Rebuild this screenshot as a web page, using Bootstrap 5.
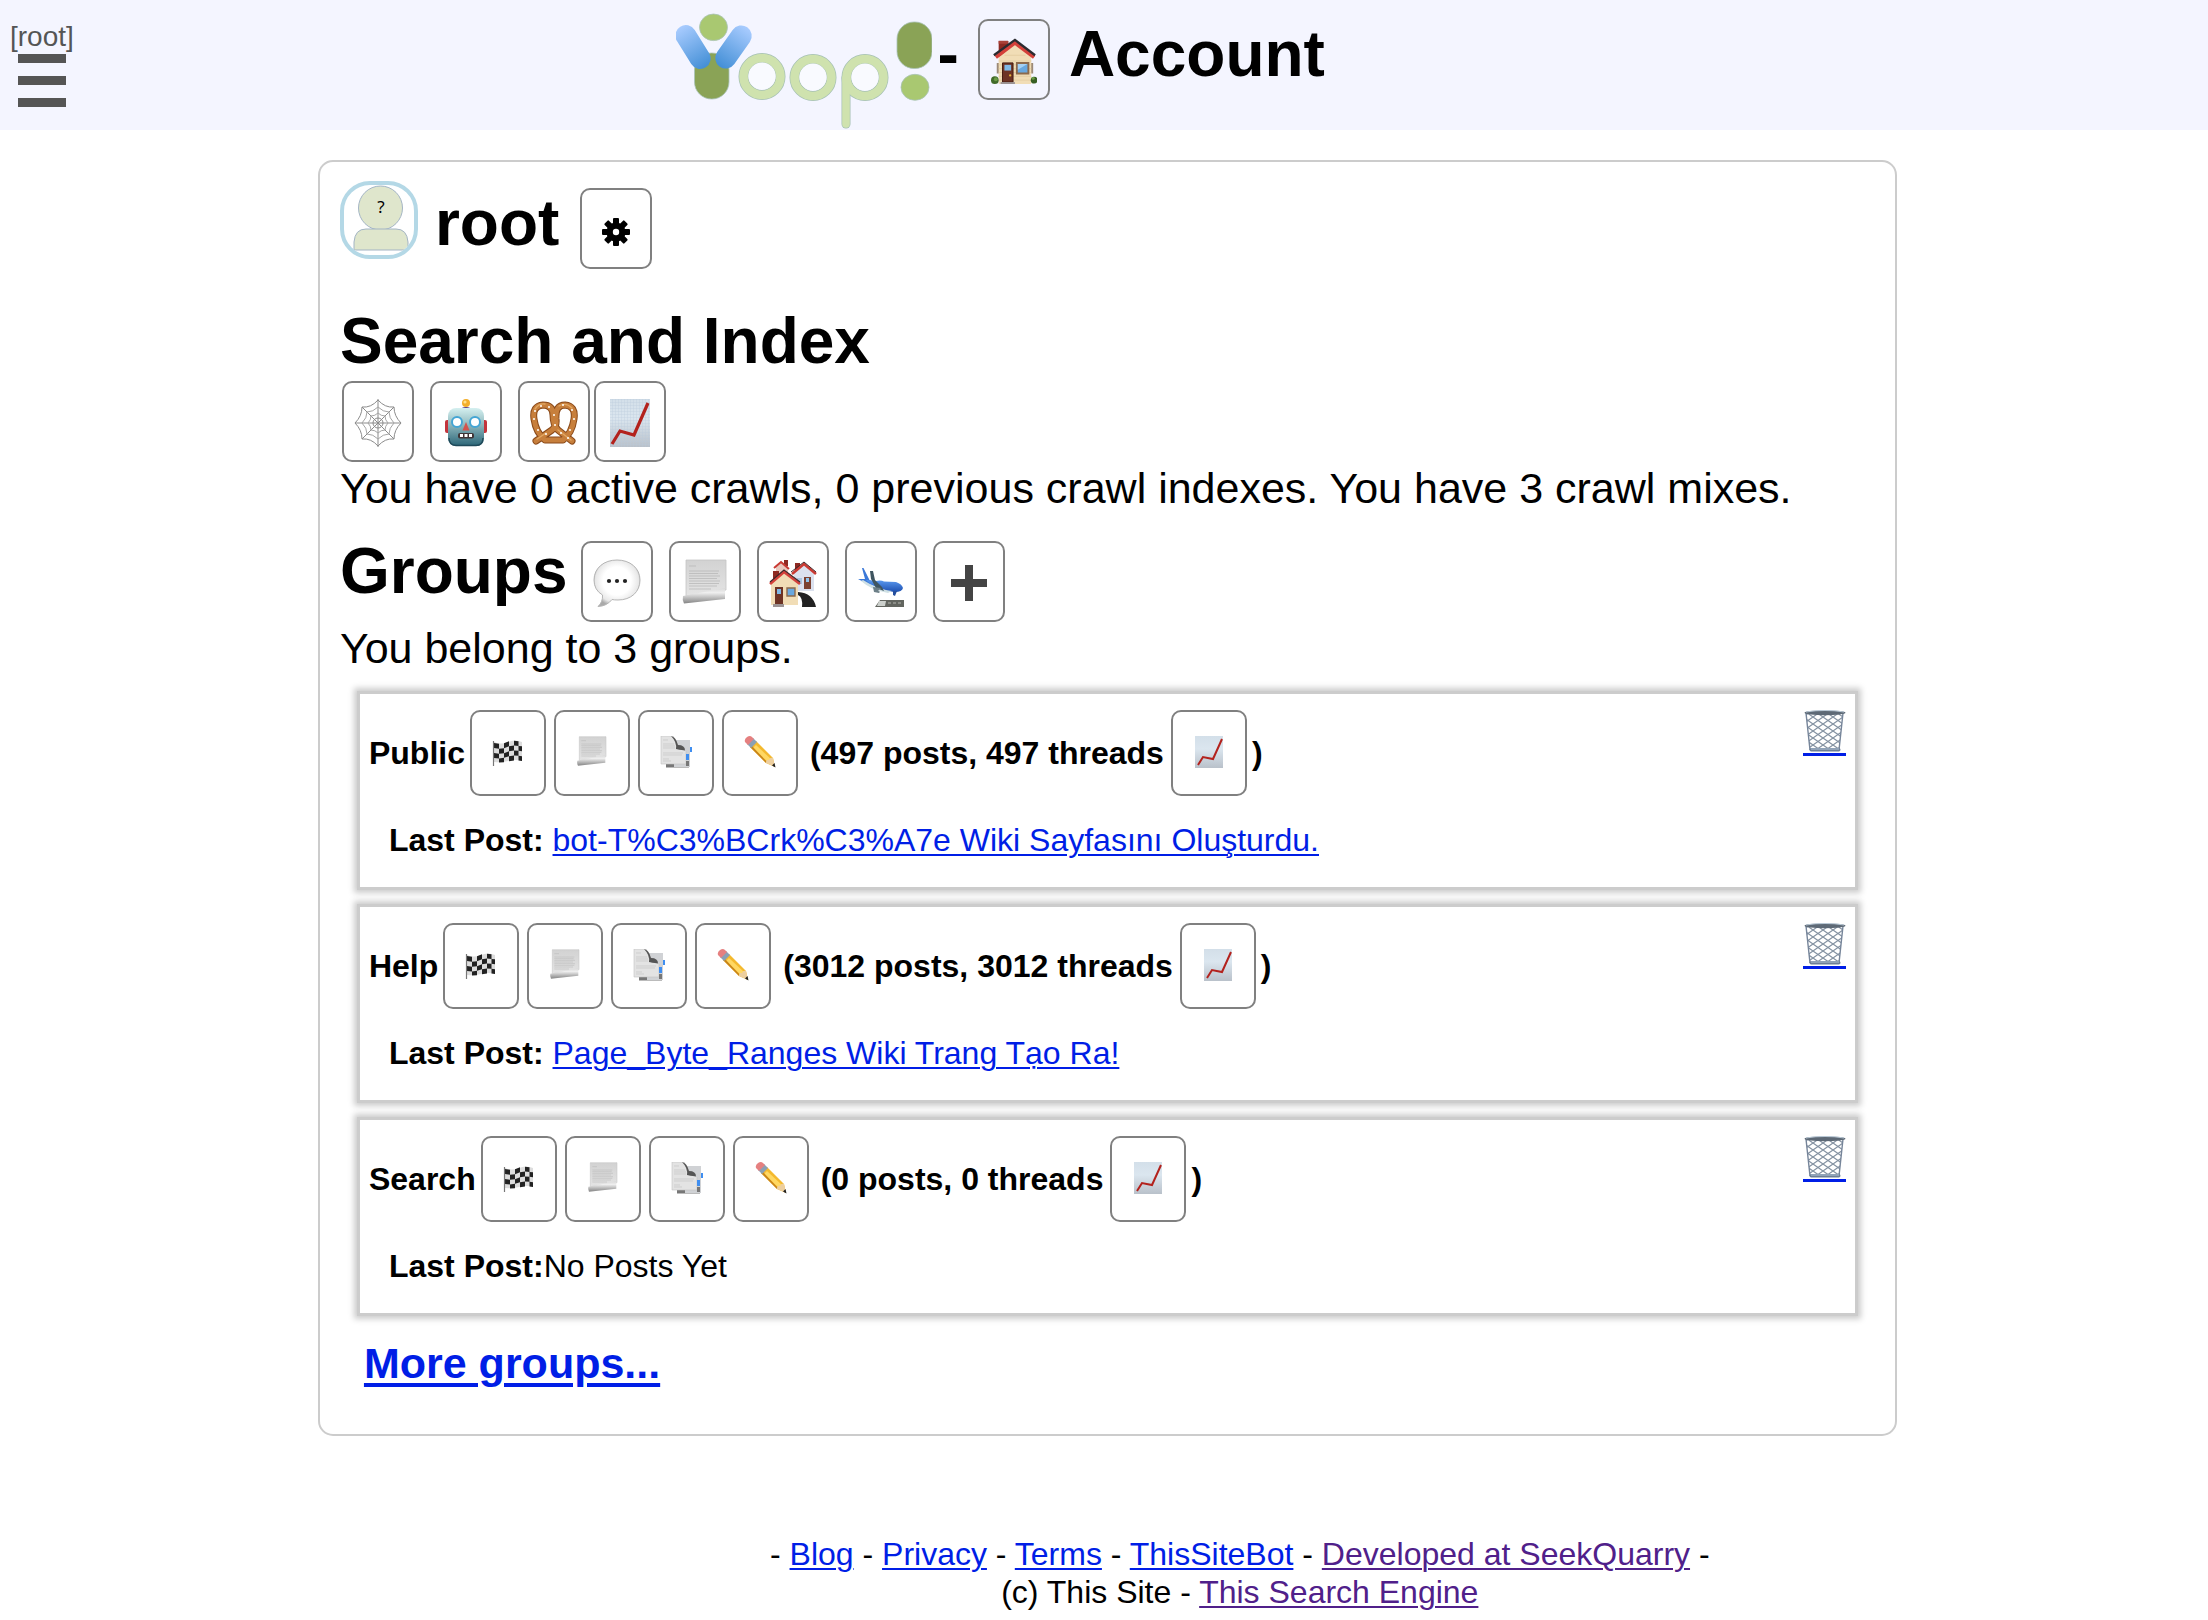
<!DOCTYPE html>
<html lang="en">
<head>
<meta charset="utf-8">
<meta name="viewport" content="width=device-width, initial-scale=1">
<title>Yoop! - Account</title>
<link href="https://cdn.jsdelivr.net/npm/bootstrap@5.3.0/dist/css/bootstrap.min.css" rel="stylesheet">
<style>
body { font-family: "Liberation Sans", Arial, sans-serif; color: #000; background: #fff; }
a { color: #001ee6; text-decoration-thickness: 2px; text-underline-offset: 3px; }
a:hover { color: #0014a0; }
a.seen { color: #50208a; }
.top-bar { background: #f4f5ff; min-height: 130px; padding-right: 9.4%; }
.menu-toggle { top: 20px; left: 10px; color: #555; font-size: 28px; line-height: 34px; }
.menu-toggle svg { margin: 0 0 0 8px; }
.big-title { font-size: 64px; font-weight: 700; line-height: 74px; }
.top-bar .big-title { padding-top: 12px; line-height: 84px; }
.top-bar .big-title .icon-btn { margin: 7px 19px 0; }
.site-logo { margin-right: 6px; }
.icon-btn { width: 72px; height: 81px; padding: 2px 0 0; border: 2px solid #808080; border-radius: 10px; display: flex; align-items: center; justify-content: center; flex: none; }
.icon-btn:hover { border-color: #333; background: #eef; }
.icon-btn.wide-btn { width: 76px; height: 86px; padding: 0 0 2px; }
.panel { width: 71.5%; margin: 30px 0 0 14.4%; border: 2px solid #ccc; border-radius: 15px; padding: 19px 20px 46px; }
.user-title { line-height: 84px; }
.user-title .icon-btn { margin: 7px 0 0 21px; }
.avatar { width: 78px; height: 78px; border: 4px solid #b4d8e6; border-radius: 30px; overflow: hidden; margin-right: 17px; flex: none; }
.avatar svg { display: block; }
.search-title { margin-top: 35px; }
.tool-row { padding: 3px 2px 0; gap: 16px; }
.tool-row .joined { gap: 4px; }
.info { font-size: 43px; line-height: 50px; margin: 1px 0 0; }
.groups-title { margin-top: 21px; gap: 16px; }
.groups-title span { margin-right: -3px; }
.groups-title .icon-btn { margin-top: 7px; }
.group-list { margin: 18px 17px 0 17px; gap: 14px; }
.group-box { border: 3px solid #ccc; box-shadow: 0 0 6px 3px #ccc; padding: 16px 9px 28px; font-size: 32px; line-height: 38px; background: #fff; }
.group-line { gap: 5px; }
.group-tools { gap: 8px; margin-right: 7px; }
.stat-text { margin-right: 2px; }
.last-post { margin: 25px 0 0 20px; }
.remove-link { width: 43px; border-bottom: 3px solid #001ee6; }
.remove-link svg { display: block; }
.more-link { font-size: 43px; line-height: 50px; font-weight: 700; margin: 22px 0 0 24px; }
.more-link a { text-decoration-thickness: 4px; text-underline-offset: 5px; }
.site-foot { margin: 99px 0 10px 12.3%; font-size: 32px; line-height: 38px; }
</style>
<script src="https://cdn.jsdelivr.net/npm/bootstrap@5.3.0/dist/js/bootstrap.bundle.min.js"></script>
</head>
<body>
<svg width="0" height="0" class="position-absolute" aria-hidden="true">
  <defs>
    <linearGradient id="gArm" x1="0" y1="0" x2="0" y2="1"><stop offset="0" stop-color="#a9ccff"/><stop offset="1" stop-color="#438fd6"/></linearGradient>
    <linearGradient id="gBot" x1="0" y1="0" x2="0" y2="1"><stop offset="0" stop-color="#d5f0f0"/><stop offset=".35" stop-color="#9dc4c8"/><stop offset="1" stop-color="#2b6577"/></linearGradient>
    <linearGradient id="gChart" x1="0" y1="0" x2="0" y2="1"><stop offset="0" stop-color="#d3dfe9"/><stop offset=".4" stop-color="#dbe6ef"/><stop offset="1" stop-color="#b9c1ca"/></linearGradient>
    <linearGradient id="gPaper" x1="0" y1="0" x2="0" y2="1"><stop offset="0" stop-color="#d2d2d2"/><stop offset="1" stop-color="#e4e4e4"/></linearGradient>
    <linearGradient id="gRoll" x1="0" y1="0" x2="0" y2="1"><stop offset="0" stop-color="#d8d8d8"/><stop offset=".3" stop-color="#efefef"/><stop offset="1" stop-color="#858585"/></linearGradient>
    <radialGradient id="gBubble" cx=".5" cy=".45" r=".55"><stop offset=".55" stop-color="#fff"/><stop offset=".85" stop-color="#e8e8e8"/><stop offset="1" stop-color="#aaa"/></radialGradient>
    <linearGradient id="gJet" x1="0" y1="0" x2="0" y2="1"><stop offset="0" stop-color="#5b9af0"/><stop offset="1" stop-color="#1d4fb0"/></linearGradient>
    <pattern id="pMesh" width="10" height="7" patternUnits="userSpaceOnUse"><path d="M0 0L10 7M10 0L0 7" stroke="#8492a2" stroke-width="1.200"/></pattern>
    <pattern id="pGrid" width="3" height="3" patternUnits="userSpaceOnUse"><path d="M0 0H3M0 0V3" stroke="#b9cad9" stroke-width=".6"/></pattern>
  </defs>

  <symbol id="i-house" viewBox="0 0 48 48">
    <path d="M8 3h10v16H8z" fill="#8e2a22"/><path d="M8 3h10v3H8z" fill="#a94238"/>
    <path d="M6 26h3v11H6zM41 26h3v11h-3z" fill="#9c8a78"/>
    <path d="M8 20L25 6l17 14v28H8z" fill="#f1ddb6"/>
    <path d="M8 24h34M8 28h34M8 32h34M8 36h34M8 40h34M8 44h34M14 18h22" stroke="#e2cb9f" stroke-width=".8"/>
    <path d="M5 20L25 5l20 15" fill="none" stroke="#d4413a" stroke-width="4"/>
    <path d="M3 18L25 2l21 16" fill="none" stroke="#2b2b30" stroke-width="2.400"/>
    <path d="M12 26h11v20H12z" fill="#6d3324" stroke="#42190f" stroke-width="1"/><path d="M14 28h7v6h-7z" fill="#7fb8e6"/><circle cx="20" cy="39" r="1.200" fill="#e6b33c"/>
    <path d="M27 26h12v11H27z" fill="#69a8df" stroke="#8c6a4c" stroke-width="2"/><path d="M28 27h10l-10 6z" fill="#a5d0f2"/>
    <path d="M10 46h15v2H10z" fill="#9b9393"/>
    <circle cx="4" cy="44" r="4" fill="#416b29"/><circle cx="5" cy="43" r="2" fill="#6a9b46"/><circle cx="45" cy="44" r="3.500" fill="#365e22"/><circle cx="44" cy="42" r="1.600" fill="#6a9b46"/>
  </symbol>

  <symbol id="i-gear" viewBox="0 0 28 28">
    <g fill="#000"><circle cx="14" cy="14" r="9.600"/>
      <g id="teeth"><rect x="11" y="0" width="6" height="28" rx="1"/><rect x="0" y="11" width="28" height="6" rx="1"/></g>
      <use href="#teeth" transform="rotate(45 14 14)"/></g>
    <circle cx="14" cy="14" r="3.200" fill="#fff"/>
  </symbol>

  <symbol id="i-web" viewBox="0 0 48 48">
    <g fill="none" stroke="#8b8b8b" stroke-width="1">
      <path d="M24 0V48M1 24H47M8 8L40 40M40 8L8 40"/>
      <path d="M24 1Q31 9 40 8Q40 17 47 24Q40 31 40 40Q31 39 24 47Q17 39 8 40Q8 31 1 24Q8 17 8 8Q17 9 24 1Z"/>
      <path d="M24 8Q29 13 35 13Q35 19 40 24Q35 29 35 35Q29 35 24 40Q19 35 13 35Q13 29 8 24Q13 19 13 13Q19 13 24 8Z" stroke="#a5a5a5"/>
      <path d="M24 14Q27 17 31 17Q31 21 34 24Q31 27 31 31Q27 31 24 34Q21 31 17 31Q17 27 14 24Q17 21 17 17Q21 17 24 14Z" stroke="#a5a5a5"/>
      <circle cx="24" cy="24" r="5"/></g>
  </symbol>

  <symbol id="i-bot" viewBox="0 0 48 48">
    <circle cx="24" cy="4" r="4" fill="#f3ae2b"/><circle cx="23" cy="3" r="1.600" fill="#ffe08a"/>
    <path d="M19 11q0-3 5-3t5 3z" fill="#58428a"/>
    <rect x="3" y="21" width="5" height="13" rx="2" fill="#c3343c"/><rect x="40" y="21" width="5" height="13" rx="2" fill="#c3343c"/>
    <rect x="6" y="9" width="36" height="38" rx="8" fill="url(#gBot)"/>
    <path d="M7 39q0 7 7 7.500h20q7 0 7-7.500" fill="none" stroke="#1f4a5a" stroke-width="1.500"/>
    <circle cx="15" cy="23" r="5" fill="#fff" stroke="#44a5d4" stroke-width="2"/><circle cx="33" cy="23" r="5" fill="#fff" stroke="#44a5d4" stroke-width="2"/>
    <path d="M24 23l3.500 8.500h-7z" fill="#d4524c"/>
    <rect x="16" y="34" width="16" height="5.500" rx="2" fill="#3f3436"/><path d="M18 35h3v3h-3zM22.500 35h3v3h-3zM27 35h3v3h-3z" fill="#fff"/>
  </symbol>

  <symbol id="i-pretzel" viewBox="0 0 48 48">
    <g fill="none" stroke-linecap="round" stroke-linejoin="round">
      <path id="dough" d="M6 42L22 31Q27 27 26 20Q25 6 35 6Q46 7 44 20Q42 34 33 41H15Q6 34 4 20Q2 7 13 6Q23 6 23 16Q23 26 28 31L42 42" stroke="#8a4a1a" stroke-width="7"/>
      <path d="M6 42L22 31Q27 27 26 20Q25 6 35 6Q46 7 44 20Q42 34 33 41H15Q6 34 4 20Q2 7 13 6Q23 6 23 16Q23 26 28 31L42 42" stroke="#c77f3c" stroke-width="5"/>
      <path d="M5 10Q9 4 15 5M29 7Q36 3 42 9M28 31L41 41M7 40L16 34" stroke="#e2a863" stroke-width="1.400"/>
    </g>
    <g fill="#fff"><circle cx="11" cy="7" r="1"/><circle cx="5" cy="12" r="1"/><circle cx="4" cy="20" r="1"/><circle cx="8" cy="31" r="1"/><circle cx="19" cy="8" r="1"/><circle cx="24" cy="16" r="1"/><circle cx="25" cy="26" r="1"/><circle cx="33" cy="6" r="1"/><circle cx="42" cy="11" r="1"/><circle cx="44" cy="20" r="1"/><circle cx="40" cy="31" r="1"/><circle cx="31" cy="34" r="1"/><circle cx="16" cy="35" r="1"/><circle cx="38" cy="39" r="1"/></g>
  </symbol>

  <symbol id="i-chart" viewBox="0 0 48 48">
    <path d="M4 0h40v48H4z" fill="url(#gChart)"/><path d="M4 0h40v48H4z" fill="url(#pGrid)"/>
    <path d="M6 45L14 32L28 36L42 4" fill="none" stroke="#b3221d" stroke-width="3.200"/>
  </symbol>
  <symbol id="i-chart-s" viewBox="0 0 32 32">
    <path d="M2 0h28v32H2z" fill="url(#gChart)"/>
    <path d="M5 29L10 21L20 23L29 3" fill="none" stroke="#b3221d" stroke-width="2"/>
  </symbol>

  <symbol id="i-talk" viewBox="0 0 48 48">
    <path d="M24 1C37 1 47 9 47 21S38 41 25 41Q21 41 19 40.500Q14 47 5 47.500Q10 43 9.500 36Q1 31 1 21C1 9 11 1 24 1Z" fill="url(#gBubble)" stroke="#b5b5b5" stroke-width="1"/>
    <g fill="#222"><circle cx="16" cy="22" r="2.100"/><circle cx="24" cy="22" r="2.100"/><circle cx="32" cy="22" r="2.100"/></g>
  </symbol>

  <symbol id="i-page" viewBox="0 0 48 48">
    <path d="M5 1h40v30L5 37z" fill="url(#gPaper)" stroke="#c4c4c4" stroke-width=".8"/>
    <path d="M8 7h7M8 12h30M8 14.500h29M8 17h31M8 19.500h28M8 22h31M8 24.500h30M8 27h28M8 30h22" stroke="#b9b9b9" stroke-width=".8"/>
    <path d="M2 37L44 29v11L3 44.500Q1 41 2 37z" fill="url(#gRoll)"/>
  </symbol>

  <symbol id="i-homes" viewBox="0 0 48 48">
    <path d="M7 7L13 3l6 4v12H7z" fill="#e8c8bd"/><path d="M15 1h4v6h-4zM26 4h5v10h-5zM4 12h6v8H4z" fill="#8e2a22"/>
    <path d="M5 9L12 3l8 7" fill="none" stroke="#c93a33" stroke-width="2"/>
    <path d="M25 14L35 6l10 9v17H25z" fill="#dbe1ee"/><path d="M23 15L35 5l12 10" fill="none" stroke="#c93a33" stroke-width="2.600"/><path d="M22 13L35 3l12 10" fill="none" stroke="#40272a" stroke-width="1"/>
    <path d="M35 18h7v12h-7z" fill="#7c4230"/><path d="M37 19h3v4h-3z" fill="#8fc4ec"/><path d="M28 19h5v6h-5z" fill="#a9c5e0"/>
    <path d="M2 24L15 14l14 11v21H2z" fill="#f1ddb6"/><path d="M1 25L15 13l16 12" fill="none" stroke="#d4413a" stroke-width="2.800"/><path d="M1 23L15 11l16 12" fill="none" stroke="#40272a" stroke-width="1.200"/>
    <path d="M6 28h8v18H6z" fill="#6d3324"/><path d="M8 30h4v5H8z" fill="#7fb8e6"/><path d="M18 29h8v8h-8z" fill="#69a8df" stroke="#8c6a4c" stroke-width="1.400"/>
    <path d="M4 45h11v3H4z" fill="#9b9393"/>
    <path d="M29 33Q44 34 47 48H33Q34 38 29 36z" fill="#222"/>
  </symbol>

  <symbol id="i-jet" viewBox="0 0 48 48">
    <path d="M5 9l1.500 0 6 12 8 3-2 3-8-2L1 20l7 0z" fill="#3b78d8"/>
    <path d="M9 21l10 1q5-1 8 .5l12 .5q6 2 7 6q-1 4-8 4-14-1-25-8z" fill="url(#gJet)"/>
    <path d="M6 21q14 9 29 11l-4 2q-17-3-27-12z" fill="#cfe0e4"/>
    <path d="M13 12l3 0 2 9 7 7 2 4-8-3-5-9z" fill="#3f5560"/><path d="M16 28l8 1-3 3q3 0 1 2l-5-1z" fill="#6c7f87"/>
    <path d="M36 32l4 0-2 5-2-1z" fill="#254f9e"/>
    <path d="M23 41h24v7H18z" fill="#62655f"/><path d="M22 42h7l-1 5h-8z" fill="#ccd0cc"/><path d="M31 44h15" stroke="#b4b6b0" stroke-width="1" stroke-dasharray="3 2"/>
  </symbol>

  <symbol id="i-plus" viewBox="0 0 48 48"><path d="M20 6h8v14h14v8H28v14h-8V28H6v-8h14z" fill="#444"/></symbol>

  <symbol id="i-flag" viewBox="0 0 32 32">
    <path d="M2 6q7 3 14 0t14 0v19q-7-2-14 0T2 26z" fill="#ddd"/>
    <path d="M2 7l5 .8v5L2 12zM12 7.200l5-2v5l-5 2zM22 4.800l4.500 .4v4.800l-4.500-.5zM7 12.800l5-.6v5l-5 .6zM17 10.200l5-.7v5l-5 .7zM26.500 10l3.500 .3v5l-3.500-.5zM2 17l5 .8v4.600L2 22zM12 17.200l5-2v5l-5 1.600zM22 14.500l4.500 .3v5l-4.500-.3zM7 22.400l5-.6v4.400l-5 .4zM17 20.200l5-.7v5l-5 .7zM26.500 19.800l3.500 .5v4.700l-3.500-.4z" fill="#222"/>
    <path d="M1.500 5v25" stroke="#777" stroke-width="1.200"/>
  </symbol>

  <symbol id="i-tabs" viewBox="0 0 32 32">
    <path d="M6 28h23v3.500H6z" fill="#777"/><path d="M14 4h16v27H14z" fill="#d0d2d5"/>
    <path d="M1 0h12l5 9 8 6v13H1z" fill="#e3e3e3" stroke="#c2c2c2" stroke-width=".6"/>
    <path d="M3 4h5M3 8h11M3 10h12M3 12h12M3 17h20M3 19h19M3 23h6M3 25h8" stroke="#c4c4c4" stroke-width=".7"/>
    <path d="M11 0q5 1 7 9q7 0 7 5.500-7-1-9-1.500 1-7-5-13z" fill="#555"/>
    <path d="M30 11h2v5h-2zM26 18h3v6h-3z" fill="#3f8ef0"/><path d="M26 25h3v5h-3z" fill="#777"/>
  </symbol>

  <symbol id="i-pencil" viewBox="0 0 32 32">
    <path d="M6 11L12 5L29 22L31 31L22 27z" fill="#f4b92e"/><path d="M9 12l3-3 16 15-3 3z" fill="#ffd862"/><path d="M6 11l2-1 16 17-2 0z" fill="#c98518"/>
    <path d="M22 27q0-4 3-3 1-3 4-2L31 31z" fill="#edcf9f"/><path d="M28 29.500l2.500-2.500L31.500 31.500z" fill="#222"/>
    <path d="M3 8l6-6 4 4-6 6z" fill="#8aa0b4"/><path d="M1 6q-1-3 2-5t5 0l2 2-6 6z" fill="#e58080"/>
  </symbol>

  <symbol id="i-bin" viewBox="0 0 43 43">
    <path d="M3 3h37L36 41H7z" fill="url(#pMesh)"/>
    <path d="M3 3L7 40M40 3L36 40" stroke="#76859a" stroke-width="1.400"/>
    <ellipse cx="22" cy="2.800" rx="20.500" ry="2.400" fill="#5d6976"/><path d="M3 2q19-3 38 0" fill="none" stroke="#b9c8d5" stroke-width="1.200"/>
    <rect x="6.500" y="38" width="31" height="3.500" rx="1.700" fill="#6d7f96"/><path d="M8 39h28" stroke="#b5c6d8" stroke-width="1"/>
  </symbol>
</svg>

<header class="top-bar position-relative d-flex justify-content-center">
  <button type="button" class="menu-toggle position-absolute border-0 bg-transparent p-0 text-start" aria-label="[root] menu">
    <span class="d-block">[root]</span>
    <svg class="d-block" width="48" height="54" viewBox="0 0 48 54"><path d="M0 0h48v9H0zM0 22h48v9H0zM0 44h48v9H0z" fill="#555"/></svg>
  </button>
  <h1 class="big-title d-flex align-items-start m-0">
    <a href="#" class="site-logo d-flex" aria-label="Yoop!">
      <svg width="256" height="118" viewBox="0 0 256 118">
        <g stroke="#a9c3b8" stroke-width=".8">
          <ellipse cx="37.500" cy="15.300" rx="14" ry="13.300" fill="#a9c871"/>
          <rect x="18.500" y="41" width="34.500" height="46" rx="17" fill="#8aa356"/>
          <rect x="221" y="10" width="35" height="46.500" rx="17" fill="#8aa356"/>
          <ellipse cx="239" cy="75.300" rx="14" ry="13" fill="#a9c871"/>
        </g>
        <rect x="6.500" y="11" width="21" height="48" rx="10.500" fill="url(#gArm)" transform="rotate(-32 17 35)"/>
        <rect x="47" y="11" width="21" height="48" rx="10.500" fill="url(#gArm)" transform="rotate(35 57.500 35)"/>
        <g fill="none" stroke="#a5c0b4" stroke-width="10"><path d="M170 66V112" stroke-linecap="round" stroke-width="9"/><circle cx="86" cy="64.500" r="18.500"/><circle cx="137" cy="65.500" r="18.500"/><circle cx="189" cy="65.500" r="18.500"/></g>
        <g fill="none" stroke="#cfe2ae" stroke-width="8.600"><path d="M170 66V112" stroke-linecap="round" stroke-width="7.600"/><circle cx="86" cy="64.500" r="18.500"/><circle cx="137" cy="65.500" r="18.500"/><circle cx="189" cy="65.500" r="18.500"/></g>
        <g fill="#f9faff"><circle cx="86" cy="64" r="13.600"/><circle cx="137" cy="65" r="13.600"/><circle cx="189" cy="65" r="13.600"/></g>
      </svg>
    </a>
    <span>-</span>
    <a href="#" class="btn icon-btn" aria-label="Home"><svg width="46" height="46"><use href="#i-house"/></svg></a>
    <span>Account</span>
  </h1>
</header>

<main class="panel">
  <h2 class="big-title user-title d-flex align-items-start m-0">
    <span class="avatar">
      <svg width="70" height="70" viewBox="0 0 70 70">
        <g fill="#dfe6cc" stroke="#a3b4c4" stroke-width="1"><circle cx="36.500" cy="23" r="22"/><path d="M10 65V57Q11 44 22 44H52Q63 44 64 57V65Z"/></g>
        <text x="37" y="28" text-anchor="middle" font-family="Noto Sans, sans-serif" font-size="17" font-weight="400" fill="#000">?</text>
      </svg>
    </span>
    <span>root</span>
    <a href="#" class="btn icon-btn" aria-label="Settings"><svg class="mt-1" width="28" height="28"><use href="#i-gear"/></svg></a>
  </h2>

  <h2 class="big-title search-title mb-0">Search and Index</h2>
  <div class="tool-row d-flex">
    <a href="#" class="btn icon-btn" aria-label="Crawls"><svg width="48" height="48"><use href="#i-web"/></svg></a>
    <a href="#" class="btn icon-btn" aria-label="Bot"><svg width="48" height="48"><use href="#i-bot"/></svg></a>
    <div class="joined d-flex">
      <a href="#" class="btn icon-btn" aria-label="Mixes"><svg width="48" height="48"><use href="#i-pretzel"/></svg></a>
      <a href="#" class="btn icon-btn" aria-label="Statistics"><svg width="48" height="48"><use href="#i-chart"/></svg></a>
    </div>
  </div>
  <p class="info">You have 0 active crawls, 0 previous crawl indexes. You have 3 crawl mixes.</p>

  <h2 class="big-title groups-title d-flex align-items-start mb-0">
    <span>Groups</span>
    <a href="#" class="btn icon-btn" aria-label="Feeds"><svg width="48" height="48"><use href="#i-talk"/></svg></a>
    <a href="#" class="btn icon-btn" aria-label="Wiki"><svg width="48" height="48"><use href="#i-page"/></svg></a>
    <a href="#" class="btn icon-btn" aria-label="My groups"><svg width="48" height="48"><use href="#i-homes"/></svg></a>
    <a href="#" class="btn icon-btn" aria-label="Join group"><svg width="48" height="48"><use href="#i-jet"/></svg></a>
    <a href="#" class="btn icon-btn" aria-label="Create group"><svg width="48" height="48"><use href="#i-plus"/></svg></a>
  </h2>
  <p class="info">You belong to 3 groups.</p>

  <div class="group-list d-flex flex-column">
    <section class="group-box">
      <div class="d-flex justify-content-between align-items-start">
        <div class="group-line d-flex align-items-center fw-bold">
          <span>Public</span>
          <div class="group-tools d-flex">
            <a href="#" class="btn icon-btn wide-btn" aria-label="Feed"><svg width="32" height="32"><use href="#i-flag"/></svg></a>
            <a href="#" class="btn icon-btn wide-btn" aria-label="Wiki"><svg width="32" height="32"><use href="#i-page"/></svg></a>
            <a href="#" class="btn icon-btn wide-btn" aria-label="Pages"><svg width="32" height="32"><use href="#i-tabs"/></svg></a>
            <a href="#" class="btn icon-btn wide-btn" aria-label="Edit"><svg width="32" height="32"><use href="#i-pencil"/></svg></a>
          </div>
          <span class="stat-text">(497 posts, 497 threads</span>
          <a href="#" class="btn icon-btn wide-btn" aria-label="Statistics"><svg width="32" height="32"><use href="#i-chart-s"/></svg></a>
          <span>)</span>
        </div>
        <a href="#" class="remove-link" aria-label="Leave Public"><svg width="43" height="43"><use href="#i-bin"/></svg></a>
      </div>
      <div class="last-post"><b>Last Post:</b> <a href="#">bot-T%C3%BCrk%C3%A7e Wiki Sayfasını Oluşturdu.</a></div>
    </section>

    <section class="group-box">
      <div class="d-flex justify-content-between align-items-start">
        <div class="group-line d-flex align-items-center fw-bold">
          <span>Help</span>
          <div class="group-tools d-flex">
            <a href="#" class="btn icon-btn wide-btn" aria-label="Feed"><svg width="32" height="32"><use href="#i-flag"/></svg></a>
            <a href="#" class="btn icon-btn wide-btn" aria-label="Wiki"><svg width="32" height="32"><use href="#i-page"/></svg></a>
            <a href="#" class="btn icon-btn wide-btn" aria-label="Pages"><svg width="32" height="32"><use href="#i-tabs"/></svg></a>
            <a href="#" class="btn icon-btn wide-btn" aria-label="Edit"><svg width="32" height="32"><use href="#i-pencil"/></svg></a>
          </div>
          <span class="stat-text">(3012 posts, 3012 threads</span>
          <a href="#" class="btn icon-btn wide-btn" aria-label="Statistics"><svg width="32" height="32"><use href="#i-chart-s"/></svg></a>
          <span>)</span>
        </div>
        <a href="#" class="remove-link" aria-label="Leave Help"><svg width="43" height="43"><use href="#i-bin"/></svg></a>
      </div>
      <div class="last-post"><b>Last Post:</b> <a href="#">Page_Byte_Ranges Wiki Trang Tạo Ra!</a></div>
    </section>

    <section class="group-box">
      <div class="d-flex justify-content-between align-items-start">
        <div class="group-line d-flex align-items-center fw-bold">
          <span>Search</span>
          <div class="group-tools d-flex">
            <a href="#" class="btn icon-btn wide-btn" aria-label="Feed"><svg width="32" height="32"><use href="#i-flag"/></svg></a>
            <a href="#" class="btn icon-btn wide-btn" aria-label="Wiki"><svg width="32" height="32"><use href="#i-page"/></svg></a>
            <a href="#" class="btn icon-btn wide-btn" aria-label="Pages"><svg width="32" height="32"><use href="#i-tabs"/></svg></a>
            <a href="#" class="btn icon-btn wide-btn" aria-label="Edit"><svg width="32" height="32"><use href="#i-pencil"/></svg></a>
          </div>
          <span class="stat-text">(0 posts, 0 threads</span>
          <a href="#" class="btn icon-btn wide-btn" aria-label="Statistics"><svg width="32" height="32"><use href="#i-chart-s"/></svg></a>
          <span>)</span>
        </div>
        <a href="#" class="remove-link" aria-label="Leave Search"><svg width="43" height="43"><use href="#i-bin"/></svg></a>
      </div>
      <div class="last-post"><b>Last Post:</b>No Posts Yet</div>
    </section>
  </div>
  <p class="more-link mb-0"><a href="#">More groups...</a></p>
</main>

<footer class="site-foot text-center">
  <div>- <a href="#">Blog</a> - <a href="#">Privacy</a> - <a href="#">Terms</a> - <a href="#">ThisSiteBot</a> - <a href="#" class="seen">Developed at SeekQuarry</a> -</div>
  <div>(c) This Site - <a href="#" class="seen">This Search Engine</a></div>
</footer>
</body>
</html>
